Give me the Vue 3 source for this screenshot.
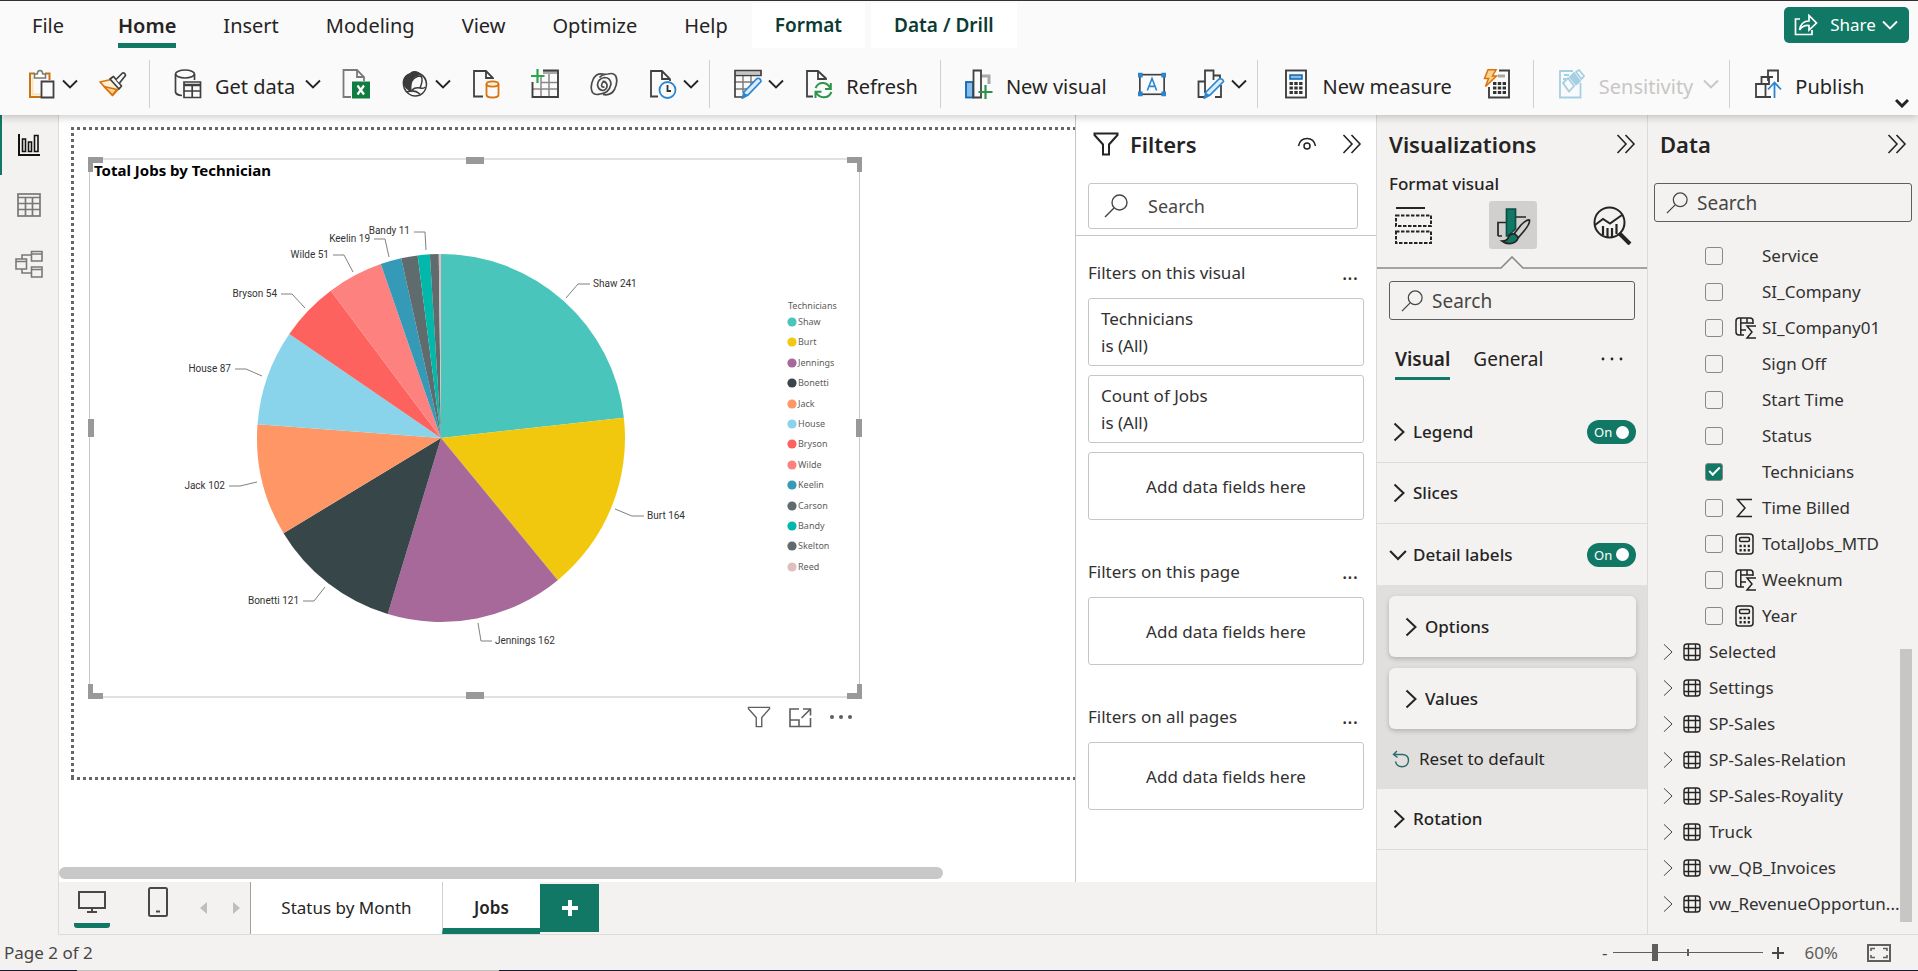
<script setup>
const tabs = ['File', 'Home', 'Insert', 'Modeling', 'View', 'Optimize', 'Help', 'Format', 'Data / Drill']

const ribbon = [
  [
    { id: 'paste', name: 'Paste', split: true },
    { id: 'brush', name: 'Format painter' },
  ],
  [
    { id: 'getdata', label: 'Get data', split: true },
    { id: 'excel', name: 'Excel workbook' },
    { id: 'onelake', name: 'OneLake data hub', split: true },
    { id: 'sql', name: 'SQL Server' },
    { id: 'enter', name: 'Enter data' },
    { id: 'dataverse', name: 'Dataverse' },
    { id: 'recent', name: 'Recent sources', split: true },
  ],
  [
    { id: 'transform', name: 'Transform data', split: true },
    { id: 'refresh', label: 'Refresh' },
  ],
  [
    { id: 'newvisual', label: 'New visual' },
    { id: 'textbox', name: 'Text box' },
    { id: 'shapes', name: 'More visuals', split: true },
  ],
  [
    { id: 'measure', label: 'New measure' },
    { id: 'quick', name: 'Quick measure' },
  ],
  [{ id: 'sensitivity', label: 'Sensitivity', split: true, disabled: true }],
  [{ id: 'publish', label: 'Publish' }],
]

const people = [
  { name: 'Shaw', value: 241, color: '#4ac5bb', line: '566,298 578,284 590,284', tx: 593, ty: 287 },
  { name: 'Burt', value: 164, color: '#f2c80f', line: '615,509 632,516 644,516', tx: 647, ty: 519 },
  { name: 'Jennings', value: 162, color: '#a66999', line: '478,623 481,641 492,641', tx: 495, ty: 644 },
  { name: 'Bonetti', value: 121, color: '#374649', line: '325,587 314,601 303,601', tx: 299, ty: 604, end: true },
  { name: 'Jack', value: 102, color: '#fe9666', line: '257,482 240,486 229,486', tx: 225, ty: 489, end: true },
  { name: 'House', value: 87, color: '#8ad4eb', line: '262,376 246,369 235,369', tx: 231, ty: 372, end: true },
  { name: 'Bryson', value: 54, color: '#fd625e', line: '305,308 292,294 281,294', tx: 277, ty: 297, end: true },
  { name: 'Wilde', value: 51, color: '#fd817e', line: '353,272 344,255 333,255', tx: 329, ty: 258, end: true },
  { name: 'Keelin', value: 19, color: '#3599b8', line: '389,257 385,239 374,239', tx: 370, ty: 242, end: true },
  { name: 'Carson', value: 15, color: '#5f6b6d' },
  { name: 'Bandy', value: 11, color: '#01b8aa', line: '426,250 425,232 414,232', tx: 410, ty: 234, end: true },
  { name: 'Skelton', value: 8, color: '#5f6b6d' },
  { name: 'Reed', value: 2, color: '#dfbfbf' },
]

const total = people.reduce((sum, p) => sum + p.value, 0)
const cx = 441
const cy = 438
const radius = 184
let run = 0
const slices = people.map((p, i) => {
  const a = (run / total) * Math.PI * 2
  run += p.value
  const b = (run / total) * Math.PI * 2
  const pt = (t) => `${(cx + radius * Math.sin(t)).toFixed(2)} ${(cy - radius * Math.cos(t)).toFixed(2)}`
  return {
    ...p,
    d: `M${cx} ${cy}L${pt(a)}A${radius} ${radius} 0 0 1 ${pt(b)}Z`,
    ly: Math.round(322 + i * 20.4),
  }
})
const labelled = slices.filter((s) => s.line)

const filterSections = [
  { title: 'Filters on this visual', cards: ['Technicians', 'Count of Jobs'] },
  { title: 'Filters on this page', cards: [] },
  { title: 'Filters on all pages', cards: [] },
]

const fields = [
  { name: 'Service' },
  { name: 'SI_Company' },
  { name: 'SI_Company01', icon: 'colsum' },
  { name: 'Sign Off' },
  { name: 'Start Time' },
  { name: 'Status' },
  { name: 'Technicians', checked: true },
  { name: 'Time Billed', icon: 'sigma' },
  { name: 'TotalJobs_MTD', icon: 'calc' },
  { name: 'Weeknum', icon: 'colsum' },
  { name: 'Year', icon: 'calc' },
]
const tables = [
  'Selected', 'Settings', 'SP-Sales', 'SP-Sales-Relation', 'SP-Sales-Royality',
  'Truck', 'vw_QB_Invoices', 'vw_RevenueOpportun...',
]
</script>

<template>
  <div class="app">
    <svg class="defs" aria-hidden="true">
      <symbol id="paste" viewBox="0 0 28 30" fill="none" stroke-width="2">
        <path d="M7 4.500H2V28H13" stroke="#c77416" stroke-width="2" />
        <path d="M4.500 8V25.500H13" stroke="#fbe3b4" stroke-width="2" />
        <path d="M17 4.500H21.500V11" stroke="#c77416" />
        <path d="M6.500 9V5H9.200Q9.500 1.500 12 1.500T14.800 5H17.500V9Z" stroke="#7a7976" stroke-width="1.600" fill="#fff" />
        <path d="M13.500 12.500H25.500V28.500H13.500Z" stroke="#404040" fill="#fafafa" stroke-width="1.800" />
      </symbol>
      <symbol id="brush" viewBox="0 0 28 30" fill="none" stroke-width="1.700" stroke-linejoin="round">
        <path d="M1 13L12 10.500L20 19.500L13.500 26.500Z" fill="#fdf0d6" stroke="#d9730d" />
        <path d="M5 17.500L18 20.500L13.500 26Z" fill="#fbd28b" stroke="#d9730d" />
        <path d="M11 10L14.500 7.500L22.500 17L20 20Z" fill="#fafafa" stroke="#404040" />
        <path d="M17 10.500L23.500 4Q26 3.500 26.500 6.500L20.500 14" fill="#fafafa" stroke="#404040" />
      </symbol>
      <symbol id="getdata" viewBox="0 0 28 30" fill="none" stroke="#404040" stroke-width="1.700">
        <ellipse cx="11" cy="5" rx="9.500" ry="4" />
        <path d="M1.500 5V23Q2 26 8 26.500M20.500 5V11" />
        <path d="M10 13H26.500V28.500H10Z" fill="#fafafa" /><path d="M10 16H26.500" stroke-width="2.500" /><path d="M10 22H26.500M18.200 16V28" />
      </symbol>
      <symbol id="excel" viewBox="0 0 28 30" fill="none">
        <path d="M9 28H1.500V1H15L22 8V12M15 1V8H22" stroke="#7a7976" stroke-width="1.800" />
        <rect x="10" y="12.500" width="18" height="17" fill="#107c41" />
        <path d="M15.500 16.500L22 25.500M22 16.500L15.500 25.500" stroke="#fff" stroke-width="2.200" />
      </symbol>
      <symbol id="onelake" viewBox="0 0 28 30" fill="none" stroke="#3b3b3b" stroke-width="1.500">
        <path d="M9 5Q13 1 18.500 4.500Q25.500 8 25.500 15.500Q25 23 19 26Q13 28.500 8 25Q1.500 20.500 2.500 12Q4 6 9 5Z" />
        <path d="M8 5.500Q14 .5 19 5.500Q12 6.500 11 11Q9 17 10 22Q4.500 20 2.500 13.500Q4 7 8 5.500Z" fill="#3b3b3b" />
        <path d="M11 12Q14 7 20 7Q22.500 11 19 19Q14 18 11 21M19 19Q23 20 24 18M6 23Q13 20 19 25" />
      </symbol>
      <symbol id="sql" viewBox="0 0 28 30" fill="none" stroke-width="1.800">
        <path d="M11 27.500H2V2H14L21 9V10M14 2V9H21" stroke="#404040" />
        <ellipse cx="20.500" cy="15" rx="6" ry="2.600" stroke="#d9730d" fill="#fdf0d6" />
        <path d="M14.500 15V26Q15 28.500 20.500 28.500T26.500 26V15" stroke="#d9730d" />
      </symbol>
      <symbol id="enter" viewBox="0 0 28 30" fill="none">
        <path d="M12 3H26.500" stroke="#a8a8a5" stroke-width="4" />
        <path d="M10 13.500H27M2 20H27M10 8V28M18 5V28" stroke="#8a8886" stroke-width="1.500" />
        <path d="M12 1.500H27V28H1.500V13" stroke="#404040" stroke-width="1.900" />
        <path d="M6.500 0V14M0 7H13.500" stroke="#2ea44f" stroke-width="2.200" />
      </symbol>
      <symbol id="dataverse" viewBox="0 0 28 30" fill="none" stroke="#4a4a4a" stroke-width="1.700">
        <path d="M15 5.500Q7 3 3.500 9.500Q-.5 18 2.500 23.500Q5 26.500 10 25Q19 24.500 21 15Q20.500 8.500 14.500 8.500Q8 9.500 7.500 16Q8.500 21.500 13.500 21.500Q17.500 20 17 15.500Q15.500 12 12.500 12.500" />
        <path d="M13 25.500Q21 27 24.500 20.500Q28.500 12 25.500 6.500Q23 3.500 18 5Q13 5 9.500 8.500M15.500 12.500Q12 12.500 11.500 16.500Q12 18.500 14.500 18" />
      </symbol>
      <symbol id="recent" viewBox="0 0 28 30" fill="none" stroke-width="1.800">
        <path d="M9 27.500H2V2H13L21 10V12M13 2V10H21" stroke="#404040" />
        <circle cx="18.500" cy="21" r="8" stroke="#2a86d0" fill="#fafafa" />
        <path d="M18.500 16V22H22" stroke="#333" />
      </symbol>
      <symbol id="transform" viewBox="0 0 28 30" fill="none">
        <path d="M1 3.500H27" stroke="#c8c6c4" stroke-width="4" />
        <path d="M1 13H22M1 20H14M9 7V24M17 7V16" stroke="#7a7976" stroke-width="1.400" />
        <path d="M8 28H1V1.500H27V6.500H1" stroke="#404040" stroke-width="1.700" />
        <path d="M10 23L23 9.500Q26.500 8.500 27 12.500L14 26L8.500 29Z" fill="#dcebf8" stroke="#2a86d0" stroke-width="1.700" />
        <path d="M10 24L14 26L8.500 29Z" fill="#2a86d0" />
      </symbol>
      <symbol id="refresh" viewBox="0 0 28 30" fill="none" stroke-width="1.800">
        <path d="M8 27.500H2V2H13L21 9.500V11M13 2V10H20" stroke="#404040" />
        <path d="M10.500 19Q13 13.500 18.500 14Q23 14.500 25.500 19.500M25.800 14V20H20M26.500 23Q24 28.500 18.500 28.300Q13.500 28 11 23.500M10.500 29V22.800H16.500" stroke="#2d9549" stroke-width="2" />
      </symbol>
      <symbol id="newvisual" viewBox="0 0 28 30" fill="none" stroke-width="1.800">
        <rect x="1" y="13" width="7" height="15.500" fill="#83beec" stroke="#1066b0" />
        <path d="M16 7H24V15" stroke="#a8a8a5" stroke-width="3" />
        <path d="M8.500 1.500H16V28.500H8.500Z" fill="#fafafa" stroke="#404040" />
        <path d="M20.500 16V30M13.500 23H27.500" stroke="#2d9549" stroke-width="2.200" />
      </symbol>
      <symbol id="textbox" viewBox="0 0 30 30" fill="none">
        <rect x="2" y="5" width="26" height="21" stroke="#404040" stroke-width="1.800" />
        <path d="M0 3H5V8H0ZM25 3H30V8H25ZM0 23H5V28H0ZM25 23H30V28H25Z" fill="#2a86d0" />
        <path d="M10 22L15 9L20 22M12 17.500H18" stroke="#2a86d0" stroke-width="1.700" />
      </symbol>
      <symbol id="shapes" viewBox="0 0 28 30" fill="none" stroke="#404040" stroke-width="1.800">
        <path d="M7 28H1.500V12.500H8V24M8 13V1.500H16.500V11M16 6.500H23V9M18 28H24V16" />
        <path d="M9 23L22 10Q26 9 26.500 12.500L13 26L7.500 29Z" fill="#dcebf8" stroke="#2a86d0" stroke-width="1.700" />
        <path d="M9 24L13 26L7.500 29Z" fill="#2a86d0" stroke="none" />
      </symbol>
      <symbol id="measure" viewBox="0 0 28 30" fill="none">
        <rect x="4" y="1.500" width="20" height="27" stroke="#404040" stroke-width="1.900" />
        <rect x="8" y="6" width="12" height="4" fill="#83beec" stroke="#1066b0" stroke-width="1.500" />
        <path d="M7.500 14.500H20.500M7.500 19H20.500M7.500 23.500H20.500" stroke="#333" stroke-width="3" stroke-dasharray="3.400 1.400" />
      </symbol>
      <symbol id="quick" viewBox="0 0 28 30" fill="none">
        <path d="M16 1.500H26V28.500H6V18" stroke="#404040" stroke-width="1.900" />
        <path d="M15 7H22" stroke="#a8a8a5" stroke-width="3" />
        <path d="M10 14.500H23M10 19H23M10 23.500H23" stroke="#333" stroke-width="3" stroke-dasharray="3.400 1.400" />
        <path d="M5 .8H13L9.500 7H13.500L2.500 17.500L5.500 9.500H1.500Z" fill="#fbd28b" stroke="#d9730d" stroke-width="1.500" />
      </symbol>
      <symbol id="sensitivity" viewBox="0 0 28 30" fill="none" stroke="#a5cfe3" stroke-width="1.800">
        <path d="M15 2H2V28.500H22.500V14" />
        <path d="M5 14L10 9L16 17L11 22.500Z" /><path d="M12 8L16 4L22 12L18 15.500Z" fill="#a5cfe3" />
        <path d="M18 3L21 1L26 7L23.500 10Z" /><path d="M6 6H11M5 10H8" />
      </symbol>
      <symbol id="publish" viewBox="0 0 28 30" fill="none" stroke="#404040" stroke-width="1.800">
        <path d="M2 15H11.500V28H2ZM11.500 28H17M7.500 15V8H15M14 12V1.500H24V13M11.500 15H15V8H19" />
        <path d="M20.500 29V14M14 20.500L20.500 13.500L27 20.500" stroke="#2a86d0" />
      </symbol>
      <symbol id="chev-down" viewBox="0 0 16 10" fill="none" stroke="currentColor" stroke-width="1.900"><path d="M1 1.500L8 8.500L15 1.500" /></symbol>
      <symbol id="chev-right" viewBox="0 0 12 20" fill="none" stroke="currentColor"><path d="M1.500 1.500L10.500 10L1.500 18.500" /></symbol>
      <symbol id="collapse" viewBox="0 0 20 20" fill="none" stroke="#252423" stroke-width="1.600"><path d="M1.500 1L10 10L1.500 19M9.500 1L18 10L9.500 19" /></symbol>
      <symbol id="search" viewBox="0 0 24 24" fill="none" stroke="currentColor" stroke-width="1.400"><circle cx="15.500" cy="8.500" r="7.500" /><path d="M10 14L1 23" /></symbol>
      <symbol id="funnel" viewBox="0 0 26 24" fill="none" stroke="currentColor"><path d="M1.500 1.500H24.500V3L16 12.500V22.500H10V12.500L1.500 3Z" /></symbol>
      <symbol id="colsum" viewBox="0 0 22 22" fill="none" stroke="#252423" stroke-width="1.500">
        <path d="M9 18H4Q1 18 1 15V4Q1 1 4 1H15Q18 1 18 4V7M5.800 1V18M12 1V6M5.800 6H18M5.800 13H11" />
        <path d="M21 9H12L17 15L12 21H21" />
      </symbol>
      <symbol id="sigma" viewBox="0 0 22 22" fill="none" stroke="#252423" stroke-width="1.500"><path d="M17 2.500H2.500L10 11L2.500 19.500H17" /></symbol>
      <symbol id="calc" viewBox="0 0 22 22" fill="none" stroke="#252423" stroke-width="1.500">
        <rect x="1" y="1" width="17" height="20" rx="3" /><rect x="4.500" y="4.500" width="10" height="4" rx="1.500" />
        <path d="M4.500 13H15.500M4.500 17.200H15.500" stroke-width="2.400" stroke-dasharray="2.200 1.900" />
      </symbol>
      <symbol id="table" viewBox="0 0 18 18" fill="none" stroke="#252423" stroke-width="1.400">
        <rect x="1" y="1" width="16" height="16" rx="3" /><path d="M1 5.500H17M1 12.500H17M5.500 1V17M12.500 1V17" />
      </symbol>
    </svg>

    <header class="top">
      <nav class="tabs" aria-label="Ribbon tabs">
        <button v-for="t in tabs" :key="t" class="tab"
          :class="{ file: t === 'File', current: t === 'Home', context: t === 'Format' || t === 'Data / Drill' }">
          <span>{{ t }}</span>
        </button>
        <button class="share">
          <svg class="share-icon" viewBox="0 0 24 22" fill="none" stroke="#fff" stroke-width="1.700">
            <path d="M6 5H1.500V20.500H18V16" /><path d="M5.500 16Q7 7 15 7V1.500L22.500 9L15 16V11.500Q9 11 5.500 16Z" />
          </svg>
          <span>Share</span>
          <svg class="chev"><use href="#chev-down" /></svg>
        </button>
      </nav>
      <div class="ribbon">
        <div v-for="(g, i) in ribbon" :key="i" class="group">
          <button v-for="b in g" :key="b.id" class="tool" :class="{ split: b.split }"
            :disabled="b.disabled" :aria-label="b.label || b.name">
            <svg class="tool-icon"><use :href="'#' + b.id" /></svg>
            <span v-if="b.label" class="tool-label">{{ b.label }}</span>
            <svg v-if="b.split" class="chev"><use href="#chev-down" /></svg>
          </button>
        </div>
        <button class="fold" aria-label="Collapse ribbon">
          <svg viewBox="0 0 14 10" fill="none" stroke="#252423" stroke-width="3"><path d="M1 2L7 8L13 2" /></svg>
        </button>
      </div>
    </header>

    <main class="work">
      <nav class="rail" aria-label="Views">
        <button class="view on" aria-label="Report view">
          <svg viewBox="0 0 28 28" fill="none" stroke="#111" stroke-width="1.600">
            <path d="M4 3V24H25" stroke-width="2" /><path d="M7.500 8H10.500V20.500H7.500ZM13.500 11H16.500V20.500H13.500ZM19.500 4.500H23V20.500H19.500Z" />
          </svg>
        </button>
        <button class="view" aria-label="Table view">
          <svg viewBox="0 0 28 28" fill="none" stroke="#7a7876" stroke-width="1.700">
            <rect x="3" y="3" width="22" height="22" /><path d="M3 6.500H25M3 12.500H25M3 18.500H25M10.500 6V25M17.500 6V25" />
          </svg>
        </button>
        <button class="view" aria-label="Model view">
          <svg viewBox="0 0 28 28" fill="none" stroke="#7a7876" stroke-width="1.600">
            <path d="M16.500 1.500H27V11H16.500ZM16.500 4H27M16.500 17H27V27H16.500ZM16.500 19.500H27M1 9H11.500V19H1ZM1 11.500H11.500M7 9V5H16.500M7 19V23H16.500" />
          </svg>
        </button>
      </nav>

      <div class="center">
        <div class="stage">
          <section class="canvas" aria-label="Report canvas">
            <div class="viewport">
              <div class="page">
                <article class="visual">
                  <h2>Total Jobs by Technician</h2>
                  <svg class="pie" viewBox="90 182 769 514" role="img" aria-label="Total Jobs by Technician">
                    <path v-for="s in slices" :key="s.name" :d="s.d" :fill="s.color" />
                    <g v-for="s in labelled" :key="s.name">
                      <polyline :points="s.line" fill="none" stroke="#808080" />
                      <text class="lab" :x="s.tx" :y="s.ty" :text-anchor="s.end ? 'end' : 'start'">{{ s.name }} {{ s.value }}</text>
                    </g>
                    <text class="leg" x="788" y="309">Technicians</text>
                    <g v-for="s in slices" :key="s.name">
                      <circle cx="792" :cy="s.ly" r="4.600" :fill="s.color" />
                      <text class="leg" x="798" :y="s.ly + 3">{{ s.name }}</text>
                    </g>
                  </svg>
                  <i class="h corner tl"></i><i class="h corner tr"></i><i class="h corner bl"></i><i class="h corner br"></i>
                  <i class="h bar t"></i><i class="h bar b"></i><i class="h side l"></i><i class="h side r"></i>
                </article>
                <div class="actions">
                  <button aria-label="Filters applied"><svg class="a-icon" stroke-width="1.500"><use href="#funnel" /></svg></button>
                  <button aria-label="Focus mode">
                    <svg class="a-icon" viewBox="0 0 24 22" fill="none" stroke="currentColor" stroke-width="1.600">
                      <path d="M11 3H2V20.500H22.500V12M2 14H11V20.500M15 3H22.500V9.500M22.500 3L13.500 12" />
                    </svg>
                  </button>
                  <button aria-label="More options">
                    <svg class="a-icon" viewBox="0 0 24 22" fill="currentColor"><circle cx="3" cy="11" r="2" /><circle cx="12" cy="11" r="2" /><circle cx="21" cy="11" r="2" /></svg>
                  </button>
                </div>
              </div>
            </div>
            <div class="hscroll"></div>
          </section>

          <aside class="filters">
            <header class="f-head">
              <svg class="f-icon" stroke-width="2"><use href="#funnel" /></svg>
              <h3>Filters</h3>
              <button aria-label="Show or hide filter pane">
                <svg class="eye" viewBox="0 0 20 14" fill="none" stroke="#252423" stroke-width="1.500"><path d="M1.500 9Q3 1.500 10 1.500T18.500 9" /><circle cx="10" cy="9" r="3" /></svg>
              </button>
              <button aria-label="Collapse filters"><svg class="dbl"><use href="#collapse" /></svg></button>
            </header>
            <label class="box f-search"><svg><use href="#search" /></svg><input type="text" placeholder="Search" aria-label="Search filters" /></label>
            <section v-for="s in filterSections" :key="s.title" class="f-sec">
              <div class="f-title"><span>{{ s.title }}</span><button class="dots" aria-label="More options">...</button></div>
              <div v-for="c in s.cards" :key="c" class="card"><span>{{ c }}</span><span>is (All)</span></div>
              <div class="card drop">Add data fields here</div>
            </section>
          </aside>
        </div>

        <nav class="pages" aria-label="Report pages">
          <button class="dev on" aria-label="Desktop layout">
            <svg viewBox="0 0 30 32" fill="none" stroke="#4a4846" stroke-width="2"><path d="M2 6H28V22H2ZM15 22V26M10 26H20" /></svg>
          </button>
          <button class="dev phone" aria-label="Mobile layout">
            <svg viewBox="0 0 30 32" fill="none" stroke="#4a4846" stroke-width="2"><rect x="6" y="2" width="18" height="28" rx="1.500" /><path d="M13 25.500H17" /></svg>
          </button>
          <button class="step" aria-label="Previous page"><svg viewBox="0 0 7 12"><path d="M7 0V12L0 6Z" fill="#c0bebc" /></svg></button>
          <button class="step" aria-label="Next page"><svg viewBox="0 0 7 12"><path d="M0 0V12L7 6Z" fill="#c0bebc" /></svg></button>
          <button class="ptab">Status by Month</button>
          <button class="ptab cur">Jobs</button>
          <button class="add" aria-label="New page"><svg viewBox="0 0 16 16" stroke="#fff" stroke-width="4"><path d="M8 0V16M0 8H16" /></svg></button>
        </nav>
      </div>

      <aside class="viz">
        <header class="p-head"><h3>Visualizations</h3><button aria-label="Collapse visualizations"><svg class="dbl"><use href="#collapse" /></svg></button></header>
        <p class="sub">Format visual</p>
        <div class="modes">
          <button aria-label="Build visual">
            <svg viewBox="0 0 40 40" fill="none" stroke="#252423" stroke-width="2">
              <path d="M3 3H32" /><path d="M3 10.500H38V21H3ZM3 26.500H38V38H3Z" stroke-dasharray="3.500 1.500" />
            </svg>
          </button>
          <button class="on" aria-label="Format visual">
            <svg viewBox="0 0 40 40" fill="none" stroke="#252423" stroke-width="1.700">
              <path d="M5 31V17.500H13M5 31H9M22 12H33" /><path d="M13.500 4H22.500V24L15 31H13.500Z" fill="#117865" stroke="#0b4f43" />
              <path d="M36.500 15Q34 14 28 20L21 29L25 33L31 26Q37 19 36.500 15Z" fill="#d2d0ce" />
              <path d="M22 29Q17 28 15.500 32Q14.500 36 9 36Q14 40 20 38Q25 36 25 32Z" fill="#117865" />
            </svg>
          </button>
          <button aria-label="Analytics">
            <svg viewBox="0 0 40 40" fill="none" stroke="#252423" stroke-width="1.700">
              <circle cx="17.500" cy="17.500" r="15" stroke-width="2" /><path d="M3 20L11 14L18 18.500L30 10" stroke-width="2" />
              <path d="M11 21V30M15.500 23V32M20 23V32M24.500 19V29" stroke-width="2.200" /><path d="M27 28L38 39" stroke-width="4" />
            </svg>
          </button>
        </div>
        <div class="notch">
          <i></i>
          <svg viewBox="0 0 24 13" fill="none" stroke="#8a8886" stroke-width="1.600"><path d="M0 12H1L12 1L23 12H24" /></svg>
          <i></i>
        </div>
        <label class="box p-search v"><svg><use href="#search" /></svg><input type="text" placeholder="Search" aria-label="Search format settings" /></label>
        <div class="vtabs">
          <button class="on">Visual</button><button>General</button>
          <button class="more" aria-label="More options"><svg viewBox="0 0 22 4" fill="#252423"><circle cx="2" cy="2" r="1.400" /><circle cx="11" cy="2" r="1.400" /><circle cx="20" cy="2" r="1.400" /></svg></button>
        </div>
        <div class="row">
          <button><svg class="cr"><use href="#chev-right" /></svg>Legend</button>
          <label class="toggle">On<input type="checkbox" checked aria-label="Legend" /></label>
        </div>
        <div class="row"><button><svg class="cr"><use href="#chev-right" /></svg>Slices</button></div>
        <div class="row open">
          <button><svg class="cd"><use href="#chev-down" /></svg>Detail labels</button>
          <label class="toggle">On<input type="checkbox" checked aria-label="Detail labels" /></label>
        </div>
        <div class="inner">
          <button class="sub-card"><svg class="cr"><use href="#chev-right" /></svg>Options</button>
          <button class="sub-card"><svg class="cr"><use href="#chev-right" /></svg>Values</button>
          <button class="reset">
            <svg viewBox="0 0 18 18" fill="none" stroke="#2b6b6b" stroke-width="1.400"><path d="M5 1L1.500 4.500L5.500 7.500M1.500 4.500H11Q16.500 5 16.500 10.500Q16 16.500 10 16.800Q4.500 16.500 3.500 11.500" /></svg>
            Reset to default
          </button>
        </div>
        <div class="row"><button><svg class="cr"><use href="#chev-right" /></svg>Rotation</button></div>
      </aside>

      <aside class="data">
        <header class="p-head"><h3>Data</h3><button aria-label="Collapse data"><svg class="dbl"><use href="#collapse" /></svg></button></header>
        <label class="box p-search d"><svg><use href="#search" /></svg><input type="text" placeholder="Search" aria-label="Search data" /></label>
        <div class="tree">
          <div class="tree-list">
            <label v-for="f in fields" :key="f.name" class="field">
              <input type="checkbox" :checked="f.checked" />
              <svg class="ficon"><use v-if="f.icon" :href="'#' + f.icon" /></svg>
              <span>{{ f.name }}</span>
            </label>
            <button v-for="t in tables" :key="t" class="tbl">
              <svg class="tc"><use href="#chev-right" /></svg><svg class="ti"><use href="#table" /></svg><span>{{ t }}</span>
            </button>
          </div>
          <div class="vscroll"></div>
        </div>
      </aside>
    </main>

    <footer class="status">
      <span>Page 2 of 2</span>
      <div class="zoom">
        <button aria-label="Zoom out">-</button>
        <input type="range" min="0" max="100" value="27" aria-label="Zoom" />
        <button class="plus" aria-label="Zoom in"><svg viewBox="0 0 12 12" stroke="#484644" stroke-width="2"><path d="M6 0V12M0 6H12" /></svg></button>
        <span class="pct">60%</span>
        <button aria-label="Fit to page">
          <svg class="fit" viewBox="0 0 24 18" fill="none" stroke="#605e5c" stroke-width="2"><rect x="1" y="1" width="22" height="16" /><path d="M4 7V4.500H8M16 4.500H20V7M4 11V13.500H8M16 13.500H20V11" stroke-width="1.600" /></svg>
        </button>
      </div>
    </footer>
    <div class="edge"></div>
  </div>
</template>

<style>
html, body { height: 100%; overflow: hidden; }
</style>

<style scoped>
.app {
  height: 100vh; display: flex; flex-direction: column; position: relative;
  font-family: "Noto Sans", "Open Sans", sans-serif; color: #252423; background: #fff;
  font-size: 17px; line-height: 24px;
}
.app *, .app *::before { box-sizing: border-box; }
.defs { position: absolute; width: 0; height: 0; }
button { font: inherit; color: inherit; background: none; border: 0; padding: 0; margin: 0; display: flex; align-items: center; white-space: nowrap; }
svg { display: block; flex: none; }
h2, h3, p { margin: 0; }
input { font: inherit; margin: 0; }

.top { background: #fafafa; border-top: 1px solid #323130; height: 115px; flex: none; position: relative; z-index: 2; box-shadow: 0 2px 8px rgba(0, 0, 0, .22); }
.tabs { display: flex; height: 47px; padding: 2px 9px 0; }
.tab { padding: 0 23px; font-size: 20px; margin-right: 1px; }
.tab span { height: 45px; line-height: 45px; border-bottom: 5px solid transparent; }
.tab.file { margin-right: 8px; }
.tab.current { font-weight: 600; }
.tab.current span { border-color: #117865; }
.tab.context { background: #fff; font-weight: 600; color: #0b3b33; margin-right: 6px; font-size: 19px; }
.share { margin: 4px 0 0 auto; width: 125px; height: 36px; border-radius: 5px; background: #117865; color: #fff; font-size: 17px; padding: 0 11px 0 10px; justify-content: space-between; }
.share-icon { width: 24px; height: 22px; }
.share span { margin-left: 6px; }
.chev { width: 16px; height: 10px; }
.ribbon { display: flex; height: 67px; align-items: center; padding-left: 4px; position: relative; }
.group { display: flex; align-items: center; height: 48px; padding-left: 24px; border-right: 1px solid #d2d0ce; margin-top: 5px; }
.group:nth-last-child(2) { border: 0; }
.tool { margin-right: 31px; height: 40px; }
.tool.split { margin-right: 21px; }
.tool:last-child { margin-right: 22px; }
.tool.split:last-child { margin-right: 10px; }
.tool-icon { width: 28px; height: 30px; }
.tool-label { margin: 5px 4px 0 13px; font-size: 20px; }
.tool:not(.split) .tool-label { margin-right: 0; }
.tool .chev { margin-left: 6px; }
.tool:disabled { color: #c8c6c4; }
.fold { position: absolute; right: 9px; bottom: 7px; }
.fold svg { width: 14px; height: 10px; }

.work { flex: 1; display: flex; min-height: 0; }
.rail { width: 59px; flex: none; background: #f3f2f1; border-right: 1px solid #dddbd9; }
.view { width: 58px; height: 60px; justify-content: center; }
.view svg { width: 28px; height: 28px; }
.view.on { border-left: 2px solid #117865; padding-right: 2px; }
.view.on ~ .view { height: 59px; }

.center { flex: 1; min-width: 0; display: flex; flex-direction: column; }
.stage { flex: 1; display: flex; min-height: 0; }
.canvas { flex: 1; min-width: 0; display: flex; flex-direction: column; background: #fff; }
.viewport { flex: 1; overflow: hidden; padding: 12px 0 0 12px; }
.page {
  width: 1161px; height: 653px; padding: 31px 18px;
  background:
    repeating-linear-gradient(90deg, #666 0 3px, transparent 3px 6px) top / 100% 3px no-repeat,
    repeating-linear-gradient(90deg, #666 0 3px, transparent 3px 6px) bottom / 100% 3px no-repeat,
    repeating-linear-gradient(180deg, #666 0 3px, transparent 3px 6px) left / 3px 100% no-repeat;
}
.visual { position: relative; width: 771px; border: solid #e1e1e1; border-width: 2px 1px; border-left-color: #c8c8c8; border-right-color: #c8c8c8; }
.visual h2 { font-size: 15px; line-height: 20px; height: 22px; padding-left: 4px; font-weight: 700; color: #000; }
.pie { width: 769px; height: 514px; }
.lab { font: 10px Roboto, sans-serif; fill: #333; }
.leg { font: 9px "Noto Sans", sans-serif; fill: #605e5c; }
.h { position: absolute; background: #999; }
.h.corner { width: 15px; height: 15px; background: none; border: 0 solid #999; }
.tl { left: -2px; top: -3px; border-width: 6px 0 0 5px !important; }
.tr { right: -3px; top: -3px; border-width: 6px 5px 0 0 !important; }
.bl { left: -2px; bottom: -3px; border-width: 0 0 6px 5px !important; }
.br { right: -3px; bottom: -3px; border-width: 0 5px 6px 0 !important; }
.bar { width: 18px; height: 7px; left: 376px; }
.bar.t { top: -3px; }
.bar.b { bottom: -3px; }
.side { width: 6px; height: 18px; top: 259px; }
.side.l { left: -2px; }
.side.r { right: -3px; }
.actions { display: flex; gap: 17px; width: 771px; justify-content: flex-end; padding: 8px 7px 0; color: #605e5c; }
.a-icon { width: 24px; height: 22px; }
.hscroll { width: 87%; height: 12px; border-radius: 6px; background: #c8c8c8; margin-bottom: 3px; }

.box { display: flex; align-items: center; border-radius: 3px; }
.box input { border: 0; outline: 0; background: none; min-width: 0; flex: 1; padding: 0; }
.box input::placeholder { color: #484644; opacity: 1; }
.box svg { color: #484644; }
.dbl { width: 20px; height: 20px; }
h3 { font-size: 22px; line-height: 28px; font-weight: 600; }

.filters { width: 301px; flex: none; border-left: 1px solid #c8c6c4; background: #fff; padding: 15px 12px 0; }
.f-head { display: flex; align-items: center; height: 28px; padding: 0 2px 0 5px; color: #252423; }
.f-icon { width: 26px; height: 24px; }
.f-head h3 { margin: 0 auto 0 11px; }
.eye { width: 20px; height: 14px; margin-right: 25px; }
.f-search { width: 270px; height: 46px; border: 1px solid #c8c6c4; margin-top: 25px; padding-left: 15px; font-size: 18px; }
.f-search svg { width: 24px; height: 24px; margin-right: 20px; }
.f-sec { color: #323130; padding-top: 26px; margin-top: 14px; }
.f-search + .f-sec { border-top: 1px solid #c8c6c4; margin: 6px -12px 0; padding: 25px 12px 0; }
.f-title { display: flex; justify-content: space-between; height: 24px; margin-bottom: 13px; padding-right: 6px; }
.f-title span { font-size: 17px; }
.dots { font-size: 20px; }
.card { width: 276px; height: 68px; border: 1px solid #c8c6c4; border-radius: 3px; padding: 6px 12px; display: flex; flex-direction: column; line-height: 27px; margin-bottom: 9px; font-size: 17px; }
.card.drop { align-items: center; justify-content: center; }
.f-sec + .f-sec { padding-top: 26px; }

.pages { height: 53px; flex: none; background: #f3f2f1; border-bottom: 1px solid #dddbd9; display: flex; padding-left: 15px; }
.dev { width: 36px; height: 46px; flex-direction: column; justify-content: center; border-bottom: 5px solid transparent; padding-bottom: 2px; }
.dev.on { border-bottom-color: #117865; border-radius: 0 0 3px 3px; }
.dev svg { width: 30px; height: 32px; }
.dev.phone { margin: 0 24px 0 30px; }
.step { width: 33px; }
.step svg { width: 7px; height: 12px; }
.step + .step { width: 17px; }
.ptab { background: #fff; border-left: 1px solid #a19f9d; padding: 0 30px; width: 192px; justify-content: center; }
.ptab.cur { width: 98px; font-weight: 600; border-left-color: #d2d0ce; border-bottom: 6px solid #117865; padding-top: 6px; }
.add { width: 59px; height: 48px; margin-top: 2px; background: #117865; justify-content: center; }
.add svg { width: 16px; height: 16px; }

.viz, .data { width: 271px; flex: none; background: #f3f2f1; border-left: 1px solid #dddbd9; border-bottom: 1px solid #dddbd9; padding-top: 15px; }
.p-head { display: flex; justify-content: space-between; align-items: center; height: 28px; padding: 0 11px 0 12px; }
.sub { margin: 14px 0 0 12px; height: 24px; font-size: 17px; font-weight: 500; }
.modes { display: flex; justify-content: space-between; padding: 5px 11px 0 12px; }
.modes button { width: 48px; height: 48px; justify-content: center; }
.modes .on { background: #d2d0ce; border-radius: 3px; }
.modes svg { width: 40px; height: 40px; }
.notch { display: flex; align-items: flex-end; margin-top: 7px; }
.notch i { flex: 1; height: 2px; background: #a5a3a1; }
.notch svg { width: 24px; height: 13px; }
.p-search { height: 39px; border: 1px solid #605e5c; padding-left: 11px; font-size: 19px; }
.p-search svg { width: 22px; height: 22px; margin-right: 9px; }
.p-search.v { margin: 12px 12px 0; }
.p-search.d { margin: 25px 6px 0; }
.vtabs { display: flex; margin: 21px 14px 0 18px; height: 40px; font-size: 19px; align-items: flex-start; }
.vtabs button { height: 39px; border-bottom: 3px solid transparent; margin-right: 23px; }
.vtabs .on { font-weight: 600; border-color: #117865; }
.vtabs .more { margin: 0 0 0 auto; padding-right: 10px; }
.more svg { width: 22px; height: 4px; }
.row { display: flex; align-items: center; justify-content: space-between; height: 61px; border-bottom: 1px solid #dddbd9; padding: 0 11px 0 12px; }
.vtabs + .row { margin-top: 21px; }
.row button, .sub-card { font-size: 17px; font-weight: 500; }
.row.open { border: 0; }
.cr { width: 12px; height: 20px; margin: 0 8px 0 4px; stroke-width: 2; }
.cd { width: 18px; height: 12px; margin: 0 6px 0 0; }
.toggle { width: 49px; height: 24px; border-radius: 12px; background: #117865; color: #fff; display: flex; align-items: center; justify-content: space-between; padding: 0 7px; font-size: 13px; }
.toggle input { appearance: none; width: 13px; height: 13px; border-radius: 50%; background: #fff; }
.inner { background: #e1dfdd; padding: 11px 11px 0 12px; height: 204px; }
.sub-card { width: 100%; height: 61px; background: #f3f2f1; border-radius: 6px; box-shadow: 0 2px 5px rgba(0, 0, 0, .2); padding-left: 12px; margin-bottom: 11px; }
.reset { height: 38px; padding-left: 3px; font-size: 17px; }
.reset svg { width: 18px; height: 18px; margin-right: 9px; }

.data { position: relative; display: flex; flex-direction: column; }
.tree { flex: 1; min-height: 0; display: flex; padding-top: 16px; color: #323130; }
.tree-list { flex: 1; min-width: 0; }
.field { display: flex; align-items: center; height: 36px; padding-left: 57px; }
.field input { appearance: none; width: 18px; height: 18px; border: 1px solid #8a8886; border-radius: 3px; display: grid; place-items: center; }
.field input:checked { background: #117865; }
.field input:checked::before { content: ""; width: 11px; height: 6px; border: solid #fff; border-width: 0 0 2px 2px; transform: translateY(-2px) rotate(-45deg); }
.ficon { width: 22px; height: 22px; margin: 0 5px 0 12px; }
.field span, .tbl span { font-size: 17px; }
.tbl { width: 100%; height: 36px; padding-left: 14px; }
.tc { width: 12px; height: 18px; margin-right: 9px; }
.ti { width: 18px; height: 18px; margin-right: 8px; }
.vscroll { width: 12px; margin: 411px 6px 12px 1px; background: #c8c6c4; flex: none; }

.status { height: 35px; flex: none; background: #f3f2f1; display: flex; align-items: center; justify-content: space-between; padding: 0 27px 0 4px; color: #484644; margin-bottom: 1px; }
.zoom { display: flex; align-items: center; font-size: 17px; }
.zoom input { appearance: none; width: 150px; height: 18px; margin: 0 9px 0 6px; background: linear-gradient(#605e5c, #605e5c) 50% 50% / 2px 7px no-repeat, linear-gradient(#605e5c, #605e5c) 50% 50% / 100% 1px no-repeat; }
.zoom input::-webkit-slider-thumb { appearance: none; width: 6px; height: 17px; background: #605e5c; }
.plus svg { width: 12px; height: 12px; }
.pct { margin: 0 29px 0 20px; color: #605e5c; font-size: 17px; }
.fit { width: 24px; height: 18px; }
.edge { position: absolute; left: 0; right: 0; bottom: 0; height: 1px; background: linear-gradient(90deg, #1b1a2e 4%, #c0c0c0 4% 26%, #1b1a2e 26%); }
</style>
